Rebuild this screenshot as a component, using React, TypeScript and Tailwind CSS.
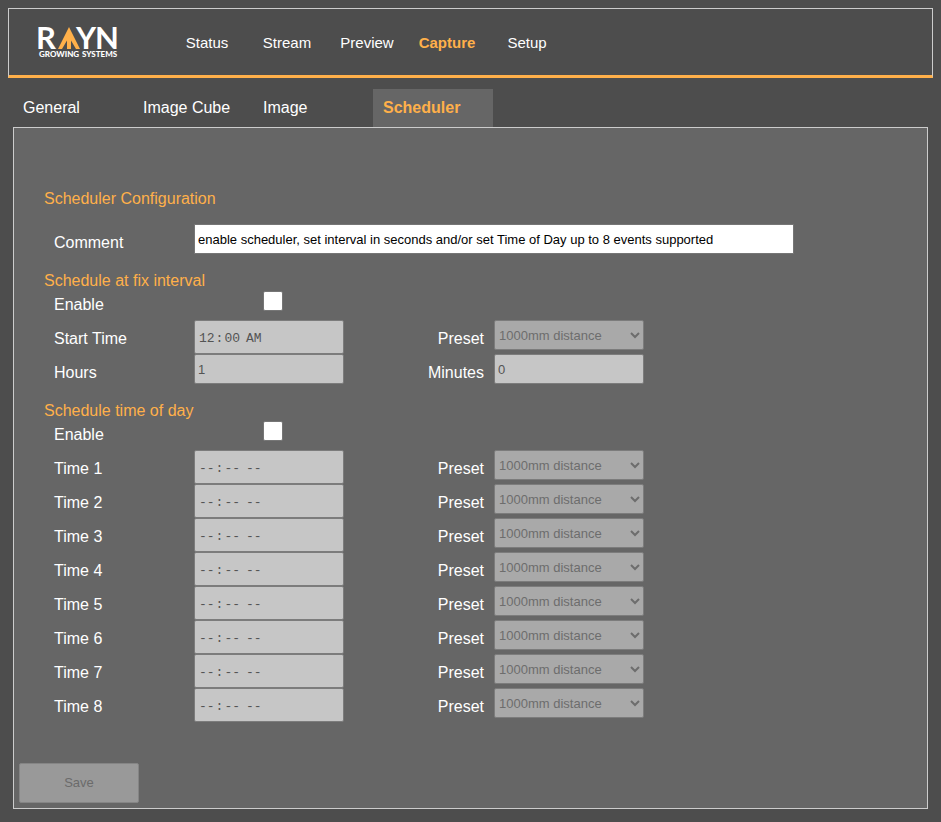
import { useState } from "react";

const NAV = ["Status", "Stream", "Preview", "Capture", "Setup"];
const TABS = ["General", "Image Cube", "Image", "Scheduler"];
const TIMES = [1, 2, 3, 4, 5, 6, 7, 8];

const LABEL = "w-[140px] shrink-0 pt-[6px] leading-[26px]";
const RIGHT_LABEL = "w-[140px] shrink-0 pt-[6px] text-right leading-[26px]";
const FIELD =
  "h-[30px] w-[150px] rounded-[2px] border border-[#7c7c7c] bg-[#c6c6c6] px-[3px] text-[13px] text-[#545454]";
const TIME_FIELD =
  "h-[34px] w-[150px] rounded-[2px] border border-[#7c7c7c] bg-[#c6c6c6] px-[3px] pt-[3px] font-['Liberation_Mono',monospace] text-[13px] text-[#545454] [&::-webkit-calendar-picker-indicator]:hidden";

function Logo() {
  return (
    <svg width="88" height="58" viewBox="-4 -12 88 58" role="img" aria-label="RAYN Growing Systems">
      <g fill="#fff" fontFamily="Lato, sans-serif">
        <text x="-2" y="24" fontSize="31" fontWeight="700">R</text>
        <text x="38" y="24" fontSize="31" fontWeight="700">Y</text>
        <text x="57" y="24" fontSize="31" fontWeight="700">N</text>
        <text x="1" y="32" fontSize="8" fontWeight="900">GROWING</text>
        <text x="44" y="32" fontSize="8" fontWeight="900">SYSTEMS</text>
      </g>
      <path d="M31 2L42 24H38L33 15.500V24H29V15.500L24 24H20Z" fill="#ffb04a" />
    </svg>
  );
}

function Heading({ children }: { children: string }) {
  return <h2 className="h-[22px] leading-6 text-[#ffb04a]">{children}</h2>;
}

function EnableRow({ id }: { id: string }) {
  const [on, setOn] = useState(false);
  return (
    <div className="flex h-[29px] items-start pl-[10px]">
      <label htmlFor={id} className="w-[140px] shrink-0 leading-7">
        Enable
      </label>
      <div className="flex w-[158px] justify-center">
        <input
          id={id}
          type="checkbox"
          checked={on}
          onChange={(e) => setOn(e.target.checked)}
          className="size-5 appearance-none rounded-[2px] border border-[#767676] bg-white checked:bg-[#ffb04a]"
        />
      </div>
    </div>
  );
}

function PresetField({ id }: { id: string }) {
  return (
    <>
      <label htmlFor={id} className={RIGHT_LABEL}>
        Preset
      </label>
      <select
        id={id}
        disabled
        className="ml-[10px] h-[30px] w-[150px] rounded-[2px] border border-[#7c7c7c] bg-[#a9a9a9] text-[13px] text-[#6d6d6d]"
      >
        <option>1000mm distance</option>
      </select>
    </>
  );
}

export default function App() {
  return (
    <div className="min-h-screen bg-[#4d4d4d] p-2 pb-[13px] font-['Liberation_Sans',Arial,sans-serif] text-base text-white">
      <header className="flex h-[70px] items-center border border-b-[3px] border-[#ccc] border-b-[#ffb04a] pl-[25px]">
        <Logo />
        <nav className="ml-[45px] flex pt-[2px]">
          {NAV.map((item) => (
            <a
              key={item}
              href="#"
              className={
                item === "Capture"
                  ? "w-20 text-center text-[15px] font-bold text-[#ffb04a]"
                  : "w-20 text-center text-[15px]"
              }
            >
              {item}
            </a>
          ))}
        </nav>
      </header>

      <main className="mx-[5px] mt-[11px]">
        <nav className="flex">
          {TABS.map((tab) => (
            <a
              key={tab}
              href="#"
              className={
                tab === "Scheduler"
                  ? "h-[38px] w-[120px] bg-[#666] pl-[10px] leading-[38px] font-bold text-[#ffb04a]"
                  : "h-[38px] w-[120px] pl-[10px] leading-[38px]"
              }
            >
              {tab}
            </a>
          ))}
        </nav>

        <form className="border border-[#ccc] bg-[#666] p-[5px]">
          <div className="pt-[54px] pl-[25px]">
            <Heading>Scheduler Configuration</Heading>
            <div className="mt-[15px] flex h-[34px] items-start pl-[10px]">
              <label htmlFor="comment" className={LABEL}>
                Comment
              </label>
              <input
                id="comment"
                type="text"
                defaultValue="enable scheduler, set interval in seconds and/or set Time of Day up to 8 events supported"
                className="h-[30px] w-[600px] border border-[#767676] bg-white px-[3px] text-[13px] text-black"
              />
            </div>

            <section className="mt-[11px]">
              <Heading>Schedule at fix interval</Heading>
              <EnableRow id="enable-interval" />
              <div className="flex h-[34px] items-start pl-[10px]">
                <label htmlFor="start" className={LABEL}>
                  Start Time
                </label>
                <input id="start" type="time" defaultValue="00:00" disabled className={TIME_FIELD} />
                <PresetField id="preset-interval" />
              </div>
              <div className="flex h-[34px] items-start pl-[10px]">
                <label htmlFor="hours" className={LABEL}>
                  Hours
                </label>
                <input id="hours" type="text" defaultValue="1" disabled className={FIELD} />
                <label htmlFor="minutes" className={RIGHT_LABEL}>
                  Minutes
                </label>
                <div className="ml-[10px] flex">
                  <input id="minutes" type="text" defaultValue="0" disabled className={FIELD} />
                </div>
              </div>
            </section>

            <section className="mt-[11px]">
              <Heading>Schedule time of day</Heading>
              <EnableRow id="enable-day" />
              {TIMES.map((n) => (
                <div key={n} className="flex h-[34px] items-start pl-[10px]">
                  <label htmlFor={`time-${n}`} className={LABEL}>
                    Time {n}
                  </label>
                  <input id={`time-${n}`} type="time" disabled className={TIME_FIELD} />
                  <PresetField id={`preset-${n}`} />
                </div>
              ))}
            </section>
          </div>

          <button
            type="button"
            disabled
            className="mt-[41px] block h-10 w-[120px] rounded-[2px] border border-[#858585] bg-[#999] text-[13px] text-[#6b6b6b]"
          >
            Save
          </button>
        </form>
      </main>
    </div>
  );
}
